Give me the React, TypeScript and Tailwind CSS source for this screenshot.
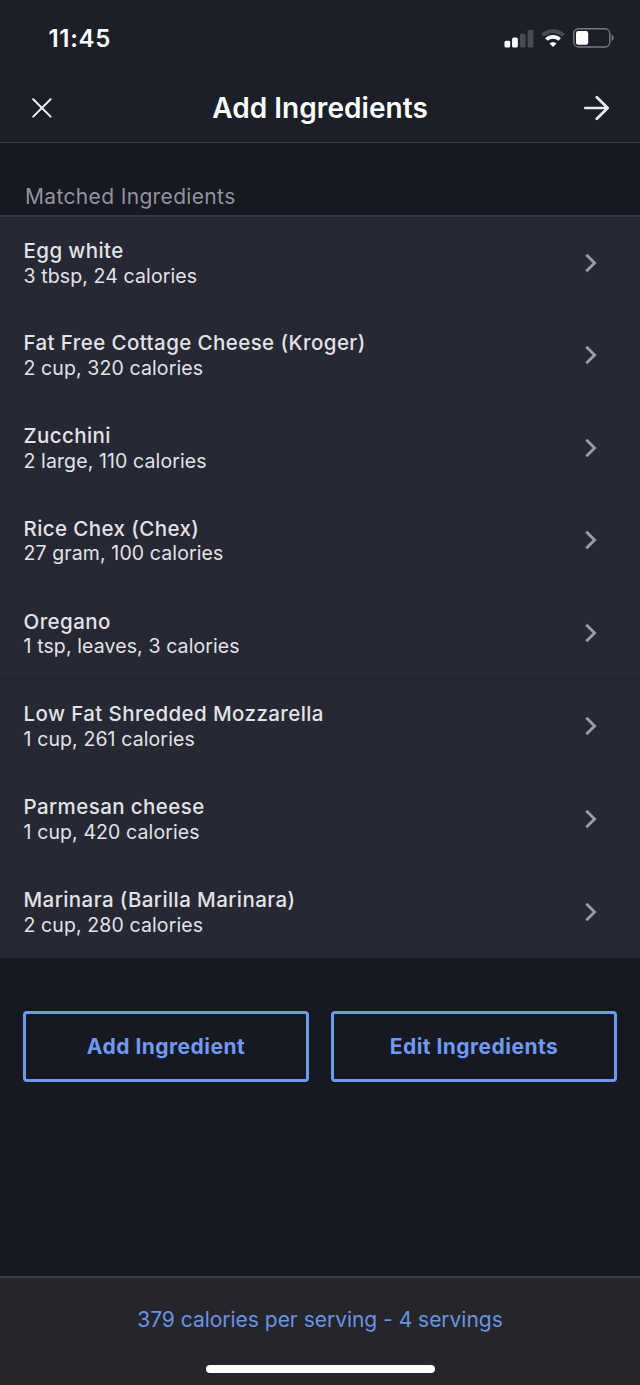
const ingredients = [
  { name: "Egg white", detail: "3 tbsp, 24 calories" },
  { name: "Fat Free Cottage Cheese (Kroger)", detail: "2 cup, 320 calories" },
  { name: "Zucchini", detail: "2 large, 110 calories" },
  { name: "Rice Chex (Chex)", detail: "27 gram, 100 calories" },
  { name: "Oregano", detail: "1 tsp, leaves, 3 calories" },
  { name: "Low Fat Shredded Mozzarella", detail: "1 cup, 261 calories" },
  { name: "Parmesan cheese", detail: "1 cup, 420 calories" },
  { name: "Marinara (Barilla Marinara)", detail: "2 cup, 280 calories" },
];

function SignalIcon() {
  return (
    <svg width="30" height="19" viewBox="0 0 30 19" aria-hidden="true">
      <rect x="0.5" y="11.7" width="5.7" height="6.8" rx="1.5" fill="#fff" />
      <rect x="8.1" y="8.5" width="5.7" height="10" rx="1.5" fill="#fff" />
      <rect x="15.8" y="4.5" width="5.7" height="14" rx="1.5" fill="#484a54" />
      <rect x="23.6" y="0.7" width="5.7" height="17.8" rx="1.5" fill="#484a54" />
    </svg>
  );
}

function WifiIcon() {
  return (
    <svg width="26" height="19" viewBox="0 0 26 19" fill="none" aria-hidden="true">
      <path d="M2.4 6.4 C8.2 0.7 17.8 0.7 23.6 6.4" stroke="#484a54" strokeWidth="4" />
      <path d="M6.4 10.5 C10.1 7 15.9 7 19.6 10.5" stroke="#fff" strokeWidth="3.7" />
      <path d="M13 18 L9.5 14.5 C11.4 12.7 14.6 12.7 16.5 14.5 Z" fill="#fff" />
    </svg>
  );
}

function BatteryIcon() {
  return (
    <svg width="42" height="20" viewBox="0 0 42 20" fill="none" aria-hidden="true">
      <rect x="0.8" y="0.8" width="36" height="18.2" rx="4.8" stroke="#777980" strokeWidth="1.4" />
      <rect x="3" y="3.1" width="12.2" height="13.6" rx="2.2" fill="#fff" />
      <path d="M38.6 6.6 C41.3 7.7 41.3 12.1 38.6 13.2 Z" fill="#777980" />
    </svg>
  );
}

function CloseIcon() {
  return (
    <svg width="20" height="20" viewBox="0 0 20 20" fill="none" stroke="#eeeef2" strokeWidth="2" strokeLinecap="round" aria-hidden="true">
      <path d="M1.2 1.2 L18.6 18.6 M18.6 1.2 L1.2 18.6" />
    </svg>
  );
}

function ArrowIcon() {
  return (
    <svg width="26" height="26" viewBox="0 0 26 26" fill="none" stroke="#e9e9ee" strokeWidth="2.7" strokeLinecap="round" strokeLinejoin="round" aria-hidden="true">
      <path d="M1.3 13 H23.7 M12.8 2.2 L23.7 13 L12.8 23.8" />
    </svg>
  );
}

function ChevronIcon() {
  return (
    <svg width="12" height="20" viewBox="0 0 12 20" fill="none" stroke="#9b9da6" strokeWidth="2.9" aria-hidden="true">
      <path d="M1.3 1.7 L9.6 10 L1.3 18.3" />
    </svg>
  );
}

export default function App() {
  return (
    <div className="flex h-[1385px] w-[640px] flex-col overflow-hidden bg-[#161822] font-['Inter',sans-serif] text-[#e2e2e7]">
      <header className="h-[143px] shrink-0 border-b border-[#383a45] bg-[#1d1f28]">
        <div className="flex h-[76px] items-center justify-between pr-[25px] pl-[48.5px]">
          <span className="pt-px text-[24px] font-semibold tracking-[0.7px] text-white">11:45</span>
          <div className="flex items-center">
            <SignalIcon />
            <span className="ml-[6px] flex"><WifiIcon /></span>
            <span className="ml-[7px] flex"><BatteryIcon /></span>
          </div>
        </div>
        <div className="flex h-[64px] items-center justify-between pr-[30px] pl-[32px]">
          <button aria-label="Close" className="flex w-[24px]"><CloseIcon /></button>
          <h1 className="text-[28px] font-semibold tracking-[0.05px] text-white">Add Ingredients</h1>
          <button aria-label="Next" className="flex w-[26px]"><ArrowIcon /></button>
        </div>
      </header>

      <main className="flex-1">
        <h2 className="flex h-[72px] items-end pb-[3.5px] pl-[25px] text-[21px] leading-[30px] tracking-[0.35px] text-[#92949c]">
          Matched Ingredients
        </h2>
        <ul className="border-t-2 border-[#363843] bg-[#262833]">
          {ingredients.map((item) => (
            <li
              key={item.name}
              className="flex h-[92.75px] items-center justify-between border-b border-[#21232e] pr-[43px] pl-[23.5px] first:h-[92px] last:border-b-0"
            >
              <div className="pt-[2px] leading-[25.5px]">
                <p className="text-[20.5px] font-medium tracking-[0.41px]">{item.name}</p>
                <p className="text-[19.5px] tracking-[0.11px]">{item.detail}</p>
              </div>
              <ChevronIcon />
            </li>
          ))}
        </ul>
        <div className="grid grid-cols-2 gap-[22px] px-[23px] pt-[52.75px] text-[21px] font-bold tracking-[0.48px] text-[#6f9af0]">
          <button className="h-[71px] rounded-[4px] border-3 border-[#6f9aee]">Add Ingredient</button>
          <button className="h-[71px] rounded-[4px] border-3 border-[#6f9aee]">Edit Ingredients</button>
        </div>
      </main>

      <footer className="flex h-[109px] shrink-0 flex-col items-center border-t-2 border-[#3c3d45] bg-[#25262c]">
        <p className="mt-[27px] text-[21px] leading-[30px] tracking-[-0.02px] text-[#6c93e0]">
          379 calories per serving - 4 servings
        </p>
        <div className="mt-[30px] h-[8px] w-[229px] rounded-full bg-white" />
      </footer>
    </div>
  );
}
